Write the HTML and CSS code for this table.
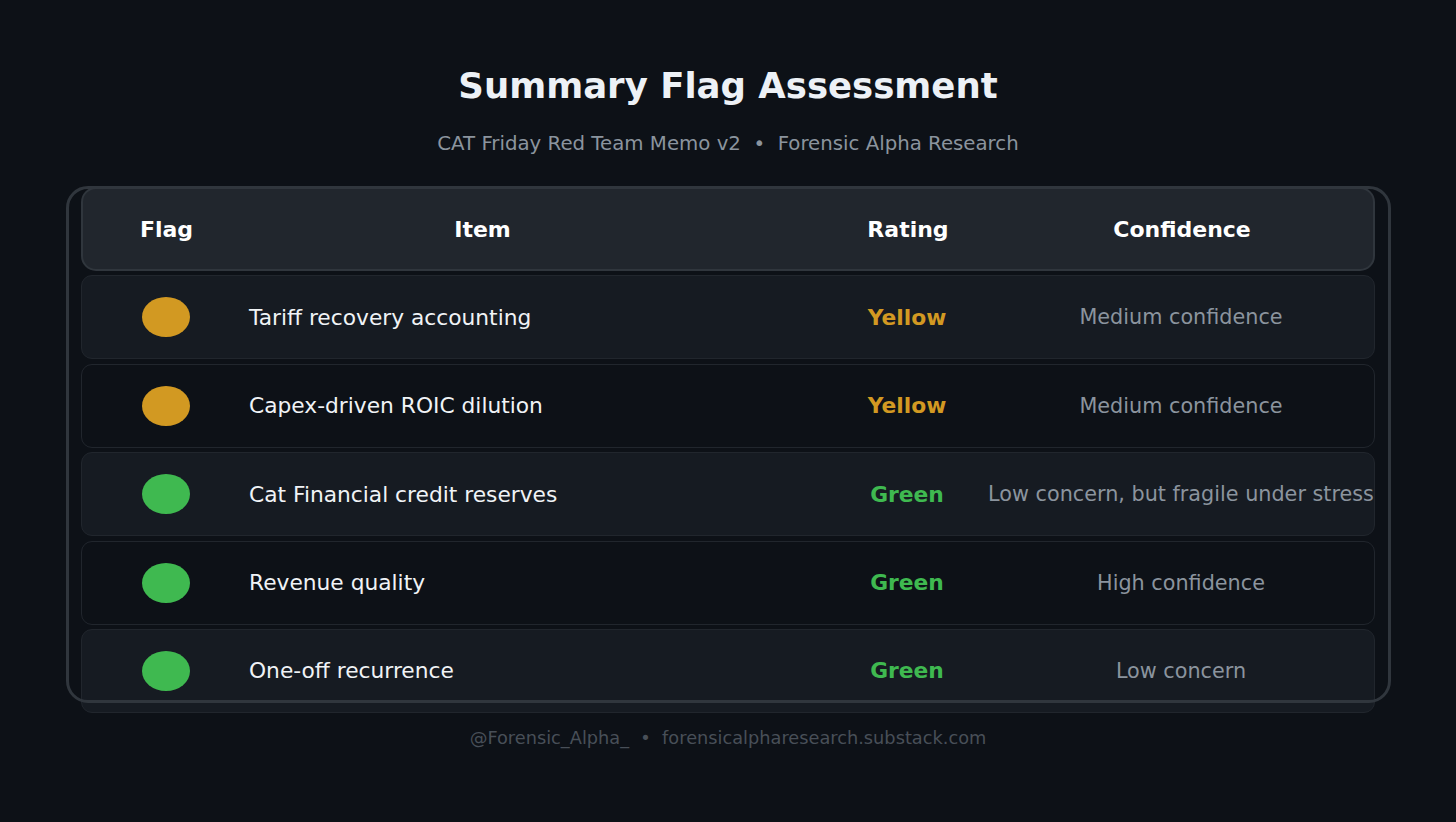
FILE: index.html
```html
<!DOCTYPE html>
<html lang="en">
<head>
<meta charset="utf-8">
<title>Summary Flag Assessment</title>
<link rel="stylesheet" href="styles.css">
</head>
<body>
<main class="page">
  <h1 class="title">Summary Flag Assessment</h1>
  <p class="subtitle">CAT Friday Red Team Memo v2&nbsp;&nbsp;•&nbsp;&nbsp;Forensic Alpha Research</p>
  <section class="table">
    <div class="row head">
      <div class="cell c-flag">Flag</div>
      <div class="cell c-item-h">Item</div>
      <div class="cell c-rating">Rating</div>
      <div class="cell c-conf">Confidence</div>
    </div>
    <div class="row odd">
      <div class="cell c-flag"><span class="dot yellow"></span></div>
      <div class="cell c-item">Tariff recovery accounting</div>
      <div class="cell c-rating t-yellow">Yellow</div>
      <div class="cell c-conf">Medium confidence</div>
    </div>
    <div class="row even">
      <div class="cell c-flag"><span class="dot yellow"></span></div>
      <div class="cell c-item">Capex-driven ROIC dilution</div>
      <div class="cell c-rating t-yellow">Yellow</div>
      <div class="cell c-conf">Medium confidence</div>
    </div>
    <div class="row odd">
      <div class="cell c-flag"><span class="dot green"></span></div>
      <div class="cell c-item">Cat Financial credit reserves</div>
      <div class="cell c-rating t-green">Green</div>
      <div class="cell c-conf">Low concern, but fragile under stress</div>
    </div>
    <div class="row even">
      <div class="cell c-flag"><span class="dot green"></span></div>
      <div class="cell c-item">Revenue quality</div>
      <div class="cell c-rating t-green">Green</div>
      <div class="cell c-conf">High confidence</div>
    </div>
    <div class="row odd">
      <div class="cell c-flag"><span class="dot green"></span></div>
      <div class="cell c-item">One-off recurrence</div>
      <div class="cell c-rating t-green">Green</div>
      <div class="cell c-conf">Low concern</div>
    </div>
  </section>
  <p class="footer">@Forensic_Alpha_&nbsp;&nbsp;•&nbsp;&nbsp;forensicalpharesearch.substack.com</p>
</main>
</body>
</html>
```

FILE: styles.css
```css
html, body {
  margin: 0;
  padding: 0;
  background: #0d1117;
}
body {
  font-family: "DejaVu Sans", "Liberation Sans", sans-serif;
  color: #e6edf3;
  width: 1456px;
  height: 822px;
  overflow: hidden;
}
.page {
  padding-top: 66px;
  display: flex;
  flex-direction: column;
  align-items: center;
}
.title {
  margin: 0;
  font-size: 35.5px;
  line-height: 40px;
  font-weight: bold;
  color: #edf1f6;
  text-align: center;
}
.subtitle {
  margin: 26px 0 0;
  font-size: 19.75px;
  line-height: 24px;
  color: #8b949e;
  text-align: center;
}
.table {
  position: relative;
  margin-top: 31px;
  width: 1294px;
  display: flex;
  flex-direction: column;
  gap: 4.4px;
}
.table::after {
  content: "";
  position: absolute;
  left: -15.5px;
  right: -15.5px;
  top: -1.5px;
  height: 517px;
  box-sizing: border-box;
  border: 3px solid #30363d;
  border-radius: 22px;
  pointer-events: none;
}
.row {
  box-sizing: border-box;
  height: 84px;
  display: grid;
  grid-template-columns: 167px 465px 386px 162px;
  align-items: center;
  border-radius: 11px;
  border: 1.5px solid #21262d;
}
.row.head {
  background: #21262d;
  border: 2px solid #30363d;
  border-radius: 15px;
  font-weight: bold;
  color: #ffffff;
}
.row.odd {
  background: #161b22;
}
.row.even {
  background: #0d1117;
}
.cell {
  display: flex;
  justify-content: center;
  white-space: nowrap;
  font-size: 20.75px;
}
.row.head .cell {
  font-size: 22px;
}
.c-item {
  justify-content: flex-start;
  color: #f0f3f6;
  font-size: 21.75px;
}
.c-conf {
  color: #8b949e;
}
.row.head .c-conf,
.row.head .c-rating {
  color: #ffffff;
}
.c-rating {
  font-weight: bold;
  font-size: 21.8px;
}
.t-yellow { color: #d29922; }
.t-green { color: #3fb950; }
.dot {
  display: block;
  width: 48px;
  height: 40px;
  border-radius: 50%;
}
.dot.yellow { background: #d29922; }
.dot.green { background: #3fb950; }
.footer {
  margin: 15px 0 0;
  font-size: 17.75px;
  line-height: 20px;
  color: #484f58;
  text-align: center;
}
```
